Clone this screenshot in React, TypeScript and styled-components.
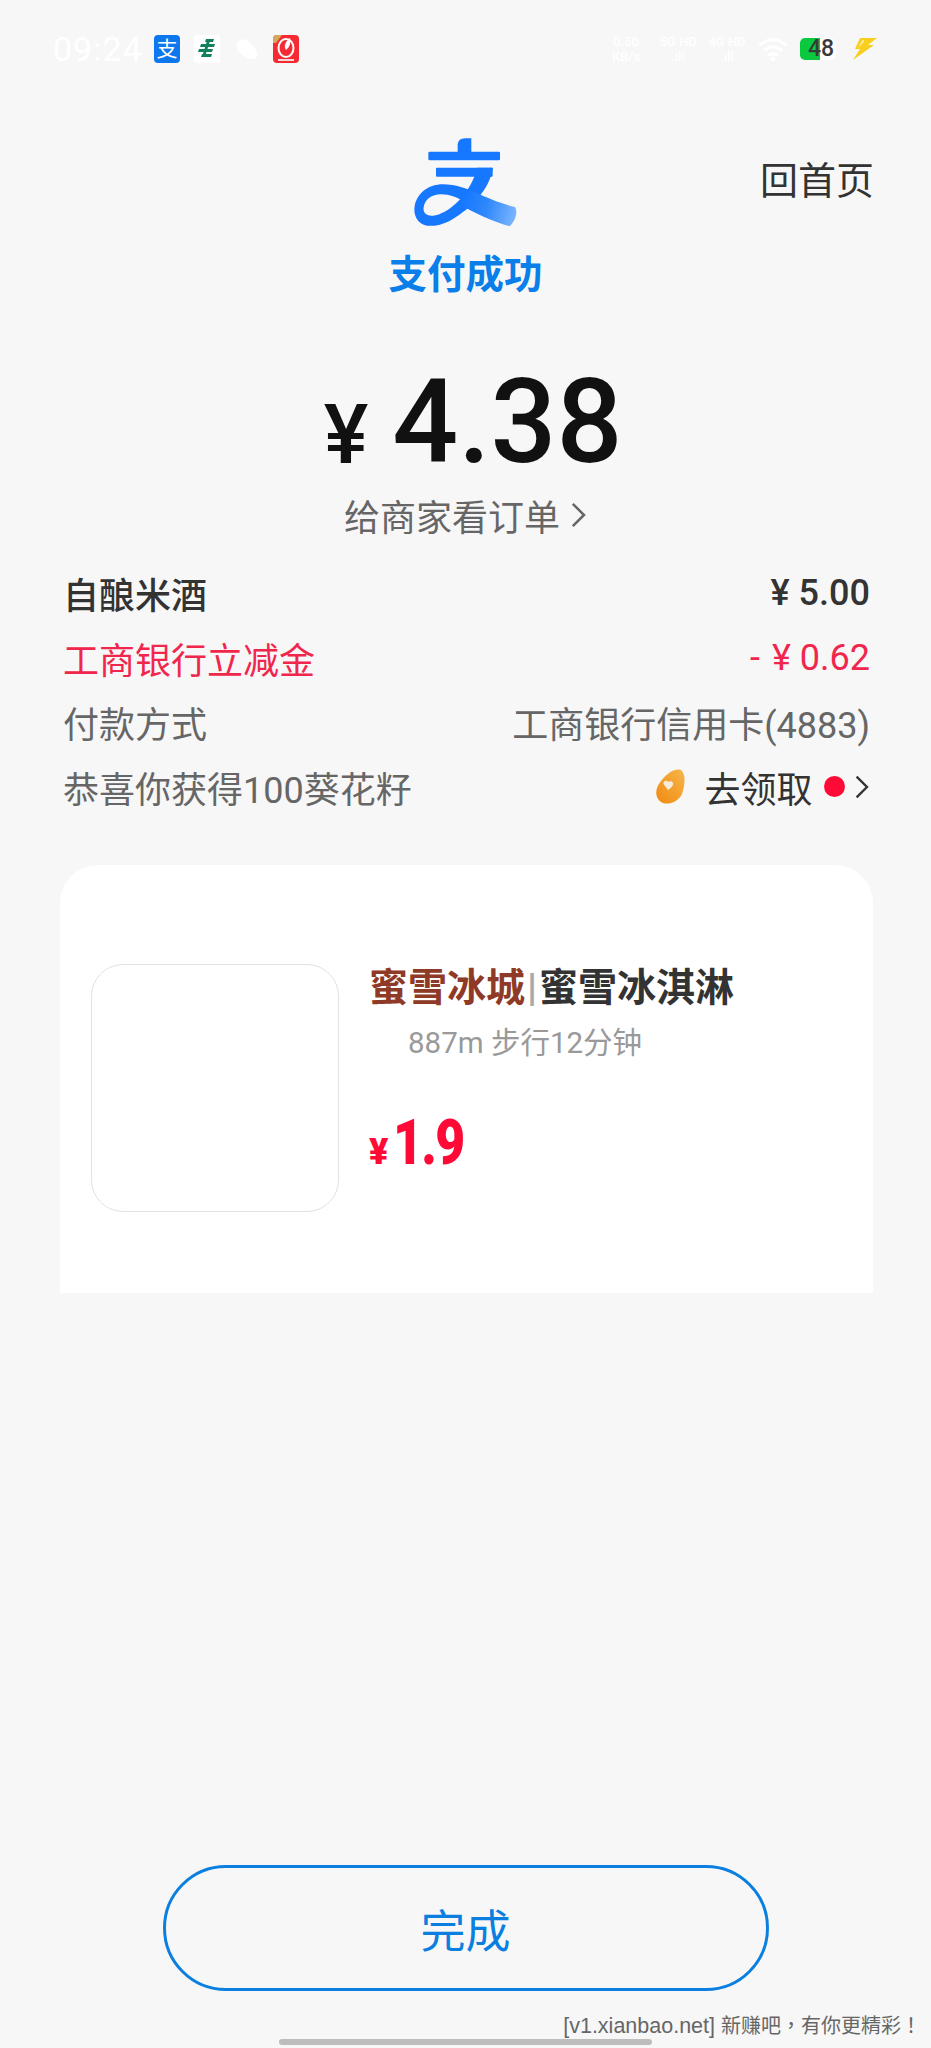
import React from "react";
import styled, { createGlobalStyle } from "styled-components";

const Global = createGlobalStyle`
  html, body { margin: 0; padding: 0; background: #f7f7f7; }
  * { box-sizing: border-box; }
`;

const FONT = `Roboto, "Noto Sans CJK SC", sans-serif`;

const Page = styled.div`
  position: relative;
  width: 931px;
  height: 2048px;
  overflow: hidden;
  display: flex;
  flex-direction: column;
  background: #f7f7f7;
  font-family: ${FONT};
  color: #333;
`;

const StatusBar = styled.div`
  height: 100px;
  padding: 35px 53px 0 53px;
  display: flex;
  justify-content: space-between;
  align-items: flex-start;
`;
const StatusGroup = styled.div`
  display: flex;
  align-items: center;
  height: 28px;
`;
const Time = styled.span`
  width: 101px;
  font-size: 34px;
  font-weight: 400;
  letter-spacing: 1px;
  color: #fff;
  line-height: 28px;
`;
const AppIcon = styled.div<{ $bg: string; $mr?: number }>`
  width: 26px;
  height: 28px;
  border-radius: 4px;
  background: ${(p) => p.$bg};
  margin-right: ${(p) => p.$mr ?? 14}px;
  display: flex;
  align-items: center;
  justify-content: center;
  color: #fff;
  font-size: 21px;
  line-height: 1;
`;
const NetStack = styled.div<{ $w: number }>`
  width: ${(p) => p.$w}px;
  display: flex;
  flex-direction: column;
  align-items: center;
  font-size: 13px;
  line-height: 15px;
  color: #fff;
  font-weight: 500;
  white-space: nowrap;
`;
const WifiSlot = styled.div`
  margin-left: 6px;
  display: flex;
`;
const Battery = styled.div`
  position: relative;
  width: 36px;
  height: 22px;
  margin: 0 16px 0 12px;
  border-radius: 6px;
  background: #fff;
  display: flex;
  align-items: center;
`;
const BatteryFill = styled.div`
  position: absolute;
  left: 0;
  top: 0;
  bottom: 0;
  width: 20px;
  background: #0ac93f;
  border-radius: 5px 0 0 5px;
`;
const BatteryText = styled.span`
  position: relative;
  font-size: 23px;
  font-weight: 500;
  color: #3a3a3a;
  margin-left: 8px;
  line-height: 22px;
`;

const Header = styled.div`
  display: grid;
  grid-template-columns: 1fr auto 1fr;
  align-items: start;
  padding: 37px 0 0 0;
  height: 270px;
`;
const Brand = styled.div`
  grid-column: 2;
  display: flex;
  flex-direction: column;
  align-items: center;
`;
const BrandTitle = styled.div`
  margin-top: 18px;
  font-size: 38.5px;
  line-height: 60px;
  font-weight: 700;
  color: #0b7fe9;
`;
const HomeLink = styled.div`
  grid-column: 3;
  justify-self: end;
  font-size: 38px;
  line-height: 54px;
  margin: 17px 57px 0 0;
  color: #333;
`;

const Amount = styled.div`
  height: 105px;
  display: flex;
  justify-content: center;
  align-items: center;
  color: #111;
  gap: 24px;
  padding-left: 15px;
`;
const AmountYen = styled.span`
  font-size: 84px;
  font-weight: 500;
  line-height: 1;
  margin-top: 24px;
`;
const AmountValue = styled.span`
  font-size: 116px;
  font-weight: 500;
  line-height: 105px;
`;
const MerchantLink = styled.div`
  margin-top: 10px;
  height: 60px;
  display: flex;
  justify-content: center;
  align-items: center;
  gap: 10px;
  font-size: 36px;
  color: #666;
`;

const Rows = styled.div`
  margin-top: 16px;
  padding: 0 61px 0 63px;
  display: flex;
  flex-direction: column;
`;
const Row = styled.div<{ $color?: string; $weight?: number }>`
  height: 64.5px;
  display: flex;
  align-items: center;
  justify-content: space-between;
  font-size: 36px;
  color: ${(p) => p.$color ?? "#666"};
  font-weight: ${(p) => p.$weight ?? 400};
`;
const Minus = styled.span`
  margin-right: 12px;
`;
const RowAction = styled.div`
  display: flex;
  align-items: center;
  color: #333;
`;
const ActionLabel = styled.span`
  margin: 0 12px 0 18px;
`;
const RedDot = styled.span`
  width: 21px;
  height: 21px;
  border-radius: 50%;
  background: #ff0a37;
  margin-right: 9px;
`;

const Card = styled.div`
  margin: 46px 58px 0 60px;
  height: 428px;
  background: #fff;
  border-radius: 38px 38px 0 0;
  padding: 99px 31px 0 31px;
  display: flex;
  align-items: flex-start;
  gap: 30px;
`;
const Thumb = styled.div`
  width: 248px;
  height: 248px;
  border: 1.5px solid #e2e2e2;
  border-radius: 32px;
  flex: none;
`;
const CardBody = styled.div`
  display: flex;
  flex-direction: column;
`;
const CardTitle = styled.div`
  font-size: 39px;
  line-height: 48px;
  font-weight: 700;
  color: #333;
  white-space: nowrap;
`;
const Brandname = styled.span`
  color: #8f3a26;
`;
const Bar = styled.span`
  color: #aaa;
  font-weight: 900;
  margin: 0 2px;
`;
const CardSub = styled.div`
  margin: 10px 0 0 39px;
  font-size: 29.5px;
  line-height: 42px;
  color: #999;
`;
const Price = styled.div`
  margin-top: 46px;
  display: flex;
  align-items: baseline;
  color: #ff0a37;
  font-weight: 900;
  line-height: 66px;
`;
const PriceYen = styled.span`
  font-size: 36px;
  margin-right: 5px;
`;
const PriceValue = styled.span`
  display: inline-block;
  font-size: 63px;
  letter-spacing: -2px;
  transform: scaleX(0.82);
  transform-origin: left center;
`;

const Spacer = styled.div`
  flex: 1;
`;
const Done = styled.div`
  margin: 0 auto 57px;
  width: 606px;
  height: 126px;
  border: 3px solid #0b7fe0;
  border-radius: 63px;
  display: flex;
  align-items: center;
  justify-content: center;
  font-size: 45px;
  color: #0b7fe0;
`;
const Watermark = styled.div`
  position: absolute;
  right: 10px;
  bottom: 10px;
  font-family: "Liberation Sans", "Noto Sans CJK TC", sans-serif;
  font-size: 21.5px;
  line-height: 24px;
  color: #666;
  white-space: nowrap;
`;
const WatermarkCjk = styled.span`
  font-size: 20px;
`;
const HomeBar = styled.div`
  position: absolute;
  left: 279px;
  bottom: 3px;
  width: 373px;
  height: 6px;
  border-radius: 3px;
  background: #bdbdbd;
`;

const Logo = () => (
  <svg width="104" height="90" viewBox="336 78 312 270">
    <defs>
      <linearGradient id="tail" x1="480" y1="280" x2="645" y2="320" gradientUnits="userSpaceOnUse">
        <stop offset="0" stopColor="#1677ff" />
        <stop offset="0.45" stopColor="#2f88fb" />
        <stop offset="1" stopColor="#7db6ff" />
      </linearGradient>
    </defs>
    <g fill="#1677ff">
      <path d="M470 100Q472 82 492 82L511 82L511 125L470 125Z" />
      <rect x="382" y="122" width="215" height="26" rx="4" />
      <rect x="405" y="170" width="170" height="27" rx="3" />
      <path d="M528 170L576 170C566 235 510 292 452 326C420 344 395 346 378 344C350 340 336 312 341 285C348 245 385 220 425 220C465 220 495 232 530 248L500 280C470 258 445 250 420 250C392 250 372 265 368 288C365 304 376 316 396 314C440 310 510 250 528 170Z" />
    </g>
    <path
      d="M510 238C560 262 600 278 642 288C652 305 642 330 626 346C570 330 520 306 474 280Z"
      fill="url(#tail)"
    />
  </svg>
);

const PostIcon = () => (
  <svg width="26" height="28" viewBox="0 0 26 28">
    <rect width="26" height="28" rx="3" fill="#fff" />
    <g fill="#12805c">
      <path d="M12 4h8l-1 3h-8zM7 9h14l-1 3H6zM5 14h14l-1 3H4zM8 19h10l-1 3H7z" />
      <path d="M13 6h3l-5 16H8z" />
    </g>
  </svg>
);

const ChatBlob = () => (
  <svg width="26" height="28" viewBox="0 0 26 28">
    <path d="M6 5C12 2 17 8 21 14C25 19 24 23 19 24C14 25 8 21 4 15C2 11 2 7 6 5Z" fill="#fff" />
  </svg>
);

const RedAppIcon = () => (
  <svg width="26" height="28" viewBox="0 0 26 28">
    <rect width="26" height="28" rx="4" fill="#f52a32" />
    <path d="M0 4a4 4 0 0 1 4-4h5L3 8H0z" fill="#d6a85a" />
    <ellipse cx="13" cy="13" rx="7.5" ry="9" fill="none" stroke="#fff" strokeWidth="2" />
    <path d="M13 15c-3-4 0-9 4-12 1 4 0 9-4 12z" fill="#fff" />
    <rect x="5" y="24" width="16" height="2" fill="#fff" opacity="0.8" />
  </svg>
);

const Wifi = () => (
  <svg width="30" height="26" viewBox="0 0 30 26" fill="none" stroke="#fff" strokeWidth="3" strokeLinecap="round">
    <path d="M2 9c8-7 18-7 26 0" />
    <path d="M7 14c5-4 11-4 16 0" />
    <path d="M11 19c3-2 5-2 8 0" />
    <circle cx="15" cy="23" r="1" />
  </svg>
);

const Bolt = () => (
  <svg width="26" height="24" viewBox="0 0 26 24">
    <path d="M8 1H25L16 8H22L1 23L8 12H3Z" fill="#f8cf1e" />
    <path d="M11 3L6 11L12 4Z" fill="#fff" />
  </svg>
);

const Seed = () => (
  <svg width="30" height="36" viewBox="0 0 30 36">
    <defs>
      <linearGradient id="seed" x1="0" y1="1" x2="1" y2="0">
        <stop offset="0" stopColor="#f08a12" />
        <stop offset="1" stopColor="#f6b64a" />
      </linearGradient>
    </defs>
    <path d="M25 1C30 5 29 16 26 25C22 33 13 36 7 34C1 32 -1 25 1 19C4 11 16 -2 25 1Z" fill="url(#seed)" />
    <path d="M9 17c-3-3-1-6 2-5c1 0 2 1 2 1c1-1 3-1 4 1c1 2-2 5-5 7c-1-1-2-3-3-4z" fill="#f7ecd8" />
  </svg>
);

const Chevron = ({ size, color }: { size: number; color: string }) => (
  <svg width={size * 0.6} height={size} viewBox="0 0 12 20" fill="none" stroke={color} strokeWidth="1.8">
    <path d="M2 2L10 10L2 18" />
  </svg>
);

export default function App() {
  return (
    <Page>
      <Global />
      <StatusBar>
        <StatusGroup>
          <Time>09:24</Time>
          <AppIcon $bg="#0d78ee">支</AppIcon>
          <AppIcon $bg="transparent"><PostIcon /></AppIcon>
          <AppIcon $bg="transparent" $mr={13}><ChatBlob /></AppIcon>
          <AppIcon $bg="transparent"><RedAppIcon /></AppIcon>
        </StatusGroup>
        <StatusGroup>
          <NetStack $w={56}><span>0.50</span><span>KB/s</span></NetStack>
          <NetStack $w={48}><span>5G HD</span><span>.ıll</span></NetStack>
          <NetStack $w={50}><span>4G HD</span><span>.ıll</span></NetStack>
          <WifiSlot><Wifi /></WifiSlot>
          <Battery><BatteryFill /><BatteryText>48</BatteryText></Battery>
          <Bolt />
        </StatusGroup>
      </StatusBar>

      <Header>
        <Brand>
          <Logo />
          <BrandTitle>支付成功</BrandTitle>
        </Brand>
        <HomeLink>回首页</HomeLink>
      </Header>

      <Amount>
        <AmountYen>¥</AmountYen>
        <AmountValue>4.38</AmountValue>
      </Amount>
      <MerchantLink>
        给商家看订单
        <Chevron size={28} color="#666" />
      </MerchantLink>

      <Rows>
        <Row $color="#333" $weight={500}><span>自酿米酒</span><span>¥ 5.00</span></Row>
        <Row $color="#f0264c"><span>工商银行立减金</span><span><Minus>-</Minus>¥ 0.62</span></Row>
        <Row><span>付款方式</span><span>工商银行信用卡(4883)</span></Row>
        <Row>
          <span>恭喜你获得100葵花籽</span>
          <RowAction>
            <Seed />
            <ActionLabel>去领取</ActionLabel>
            <RedDot />
            <Chevron size={26} color="#333" />
          </RowAction>
        </Row>
      </Rows>

      <Card>
        <Thumb />
        <CardBody>
          <CardTitle><Brandname>蜜雪冰城</Brandname><Bar>|</Bar>蜜雪冰淇淋</CardTitle>
          <CardSub>887m 步行12分钟</CardSub>
          <Price><PriceYen>¥</PriceYen><PriceValue>1.9</PriceValue></Price>
        </CardBody>
      </Card>

      <Spacer />
      <Done>完成</Done>
      <Watermark>[v1.xianbao.net] <WatermarkCjk>新赚吧，有你更精彩！</WatermarkCjk></Watermark>
      <HomeBar />
    </Page>
  );
}
